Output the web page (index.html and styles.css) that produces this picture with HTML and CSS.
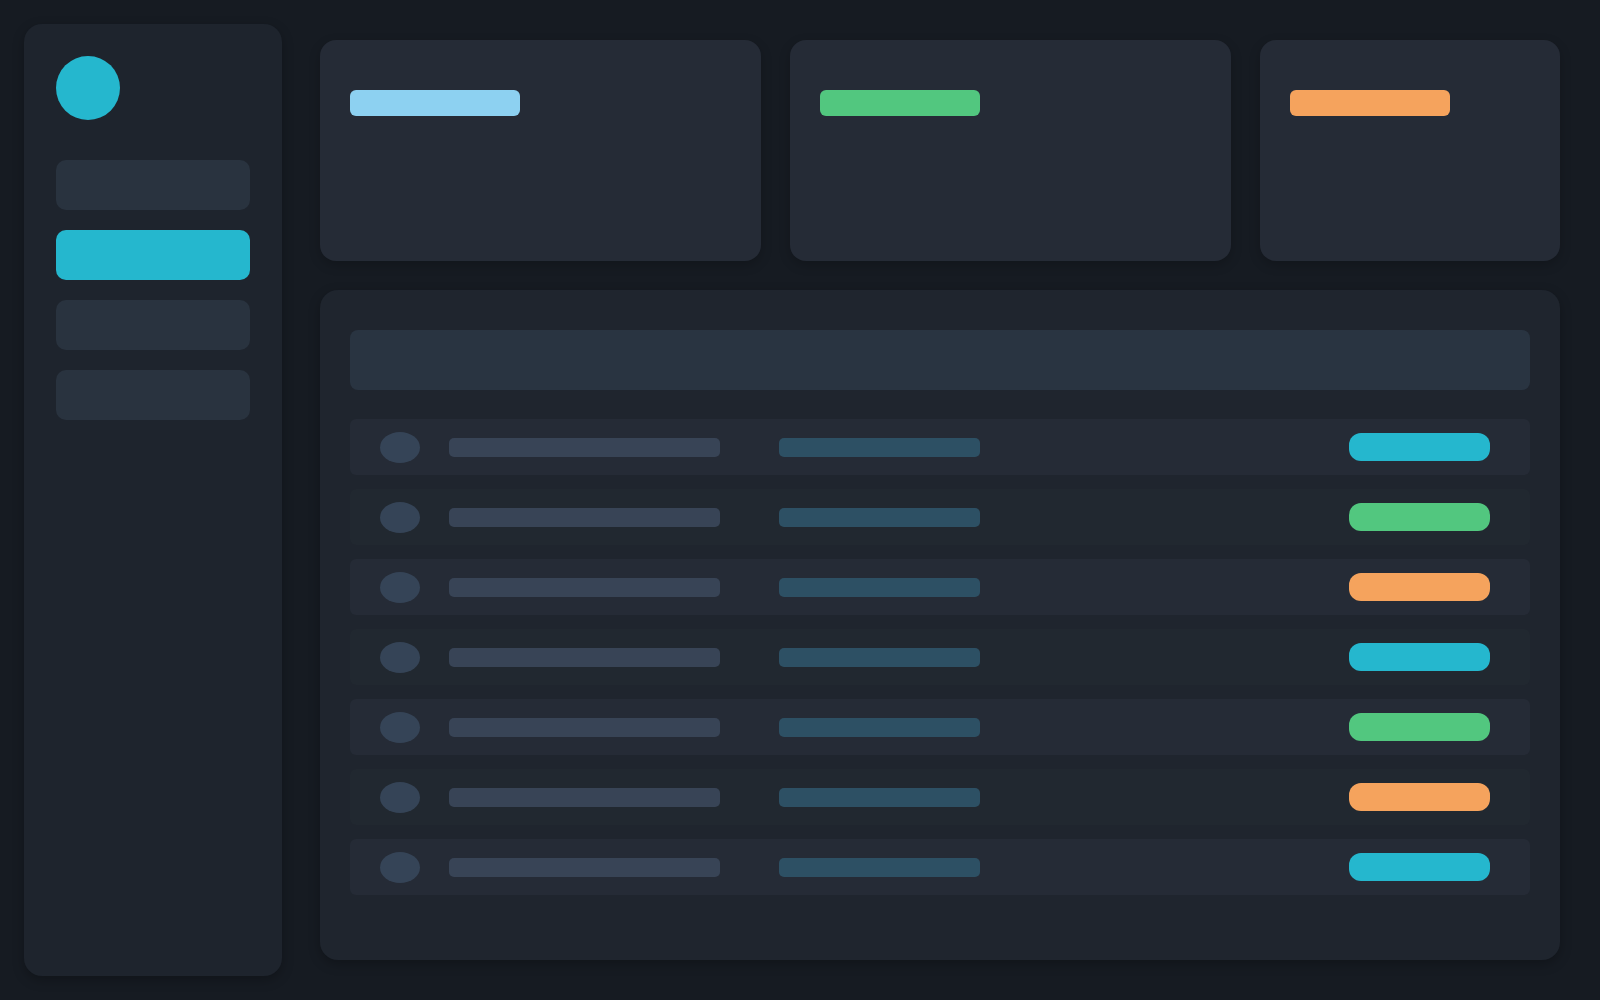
FILE: index.html
```html
<!DOCTYPE html>
<html lang="en">
<head>
    <meta charset="UTF-8">
    <meta name="viewport" content="width=device-width, initial-scale=1.0">
    <title>Dashboard</title>
    <link rel="stylesheet" href="styles.css">
</head>
<body>
    <div class="app">
        <aside class="sidebar">
            <div class="logo"></div>
            <nav class="nav">
                <div class="nav-item"></div>
                <div class="nav-item active"></div>
                <div class="nav-item"></div>
                <div class="nav-item"></div>
            </nav>
        </aside>

        <main class="main">
            <section class="stats">
                <div class="stat-card">
                    <div class="stat-label blue"></div>
                </div>
                <div class="stat-card">
                    <div class="stat-label green short"></div>
                </div>
                <div class="stat-card">
                    <div class="stat-label orange short"></div>
                </div>
            </section>

            <section class="panel">
                <div class="table-head"></div>
                <div class="rows">
                    <div class="row">
                        <div class="avatar"></div>
                        <div class="cell-name"></div>
                        <div class="cell-meta"></div>
                        <div class="pill cyan"></div>
                    </div>
                    <div class="row">
                        <div class="avatar"></div>
                        <div class="cell-name"></div>
                        <div class="cell-meta"></div>
                        <div class="pill green"></div>
                    </div>
                    <div class="row">
                        <div class="avatar"></div>
                        <div class="cell-name"></div>
                        <div class="cell-meta"></div>
                        <div class="pill orange"></div>
                    </div>
                    <div class="row">
                        <div class="avatar"></div>
                        <div class="cell-name"></div>
                        <div class="cell-meta"></div>
                        <div class="pill cyan"></div>
                    </div>
                    <div class="row">
                        <div class="avatar"></div>
                        <div class="cell-name"></div>
                        <div class="cell-meta"></div>
                        <div class="pill green"></div>
                    </div>
                    <div class="row">
                        <div class="avatar"></div>
                        <div class="cell-name"></div>
                        <div class="cell-meta"></div>
                        <div class="pill orange"></div>
                    </div>
                    <div class="row">
                        <div class="avatar"></div>
                        <div class="cell-name"></div>
                        <div class="cell-meta"></div>
                        <div class="pill cyan"></div>
                    </div>
                </div>
            </section>
        </main>
    </div>
</body>
</html>
```

FILE: styles.css
```css
* {
    box-sizing: border-box;
}

body {
    margin: 0;
    background: #161b22;
    font-family: 'Inter', sans-serif;
    height: 100vh;
}

.app {
    display: flex;
    gap: 22px;
    height: 100%;
    padding: 24px;
}

/* sidebar */
.sidebar {
    width: 258px;
    flex-shrink: 0;
    background: #1e242d;
    border-radius: 18px;
    padding: 32px;
    box-shadow: 0 4px 12px rgba(0, 0, 0, 0.25);
}

.logo {
    width: 64px;
    height: 64px;
    border-radius: 50%;
    background: #25b7ce;
}

.nav {
    display: flex;
    flex-direction: column;
    gap: 20px;
    margin-top: 40px;
}

.nav-item {
    height: 50px;
    border-radius: 10px;
    background: #29333f;
}

.nav-item.active {
    background: #25b7ce;
}

/* main area */
.main {
    flex: 1;
    display: grid;
    grid-template-rows: 221px 1fr;
    gap: 29px;
    padding: 16px;
}

.stats {
    display: grid;
    grid-template-columns: 1fr 1fr 0.68fr;
    gap: 29px;
}

.stat-card {
    background: #252b36;
    border-radius: 16px;
    padding: 50px 30px 30px;
    box-shadow: 0 4px 12px rgba(0, 0, 0, 0.2);
}

.stat-label {
    width: 170px;
    height: 26px;
    border-radius: 6px;
}

.stat-label.short { width: 160px; }
.stat-label.blue { background: #8dd1f1; }
.stat-label.green { background: #52c77f; }
.stat-label.orange { background: #f5a35d; }

/* table */
.panel {
    background: #1f252e;
    border-radius: 18px;
    padding: 40px 30px;
    box-shadow: 0 4px 12px rgba(0, 0, 0, 0.25);
}

.table-head {
    height: 60px;
    border-radius: 8px;
    background: #293441;
    margin-bottom: 29px;
}

.rows {
    display: flex;
    flex-direction: column;
    gap: 14px;
}

.row {
    height: 56px;
    display: flex;
    align-items: center;
    padding: 0 40px 0 30px;
    border-radius: 6px;
    background: #212830;
}

.row:nth-child(odd) {
    background: #252b36;
}

.avatar {
    width: 40px;
    height: 31px;
    border-radius: 50%;
    background: #354457;
    flex-shrink: 0;
}

.cell-name {
    width: 271px;
    height: 19px;
    margin-left: 29px;
    border-radius: 5px;
    background: #384456;
}

.cell-meta {
    width: 201px;
    height: 19px;
    margin-left: 59px;
    border-radius: 5px;
    background: #2d5064;
}

.pill {
    width: 141px;
    height: 28px;
    margin-left: auto;
    border-radius: 12px;
}

.pill.cyan { background: #25b7ce; }
.pill.green { background: #52c77f; }
.pill.orange { background: #f5a35d; }
```
